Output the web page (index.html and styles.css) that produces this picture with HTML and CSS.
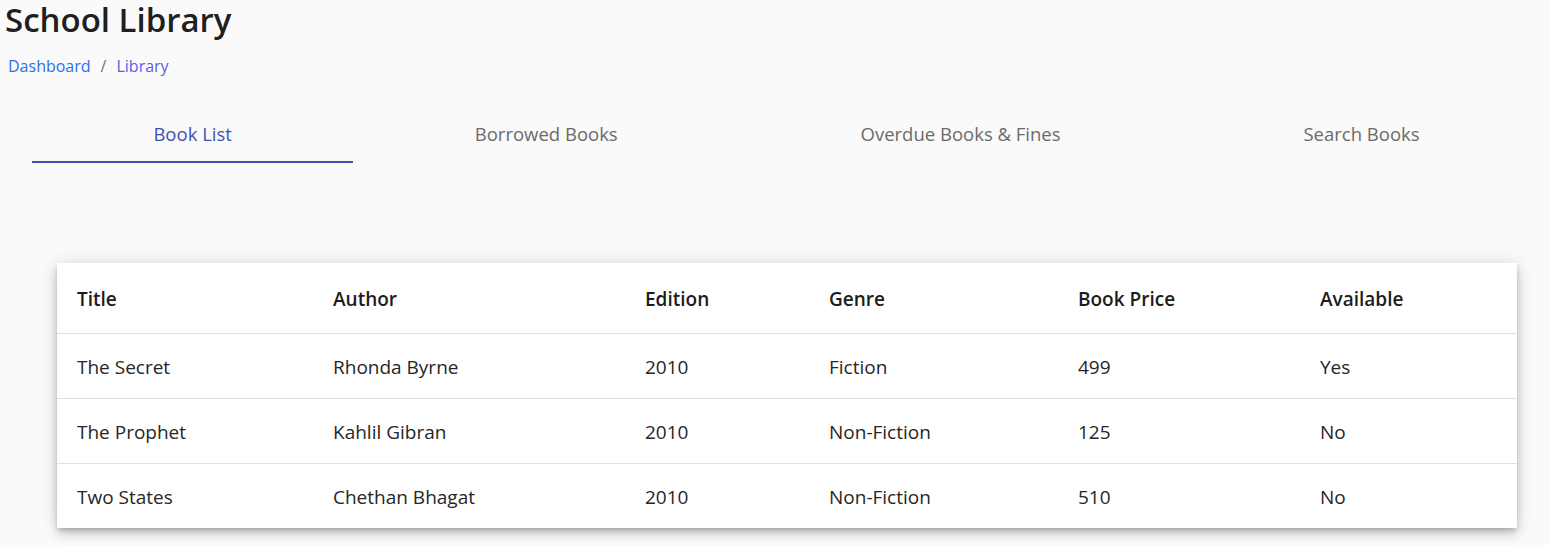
FILE: index.html
```html
<!DOCTYPE html>
<html lang="en">
<head>
<meta charset="utf-8">
<title>School Library</title>
<link rel="stylesheet" href="styles.css">
</head>
<body>
<header class="page-head">
  <h1 class="page-title">School Library</h1>
  <nav class="breadcrumb">
    <a class="crumb" href="#">Dashboard</a>
    <span class="sep">/</span>
    <a class="crumb crumb-current" href="#">Library</a>
  </nav>
</header>
<div class="tabs">
  <button class="tab tab-active">Book List</button>
  <button class="tab">Borrowed Books</button>
  <button class="tab">Overdue Books &amp; Fines</button>
  <button class="tab">Search Books</button>
</div>
<section class="card">
  <table class="books">
    <colgroup>
      <col class="c-title"><col class="c-author"><col class="c-edition"><col class="c-genre"><col class="c-price"><col class="c-avail">
    </colgroup>
    <thead>
      <tr><th>Title</th><th>Author</th><th>Edition</th><th>Genre</th><th>Book Price</th><th>Available</th></tr>
    </thead>
    <tbody>
      <tr><td>The Secret</td><td>Rhonda Byrne</td><td>2010</td><td>Fiction</td><td>499</td><td>Yes</td></tr>
      <tr><td>The Prophet</td><td>Kahlil Gibran</td><td>2010</td><td>Non-Fiction</td><td>125</td><td>No</td></tr>
      <tr><td>Two States</td><td>Chethan Bhagat</td><td>2010</td><td>Non-Fiction</td><td>510</td><td>No</td></tr>
    </tbody>
  </table>
</section>
</body>
</html>
```

FILE: styles.css
```css
* { box-sizing: border-box; }
html, body { margin: 0; padding: 0; }
body {
  background: #fafafa;
  font-family: "Open Sans", "Noto Sans", "Liberation Sans", sans-serif;
  color: #212121;
}
.page-head { padding-left: 5px; }
.page-title {
  margin: 0;
  font-size: 33px;
  line-height: 40px;
  font-weight: 600;
  color: #1f1f1f;
}
.breadcrumb {
  margin-top: 14px;
  padding-left: 3px;
  font-size: 16px;
  line-height: 24px;
  display: flex;
  gap: 10px;
}
.crumb { color: #2b6ef5; text-decoration: none; }
.crumb-current { color: #5a5ee6; }
.sep { color: #757575; }
.tabs {
  display: flex;
  margin-top: 29px;
  padding: 0 8px 0 32px;
}
.tab {
  flex: 1 1 auto;
  height: 56px;
  padding: 15px 0 15px;
  border: 0;
  border-bottom: 2px solid transparent;
  background: transparent;
  font-family: inherit;
  font-size: 18.5px;
  line-height: 24px;
  color: #6b6b6b;
  cursor: pointer;
}
.tab-active { color: #3f51b5; border-bottom-color: #3f51b5; }
.card {
  margin: 100px 32px 18px 57px;
  background: #fff;
  box-shadow: 0 3px 5px -1px rgba(0,0,0,.2), 0 6px 10px 0 rgba(0,0,0,.14), 0 1px 18px 0 rgba(0,0,0,.12);
}
.books {
  width: 100%;
  border-collapse: collapse;
  table-layout: fixed;
  font-size: 19px;
  line-height: 24px;
}
.c-title { width: 256px; }
.c-author { width: 312px; }
.c-edition { width: 184px; }
.c-genre { width: 249px; }
.c-price { width: 242px; }
.c-avail { width: 217px; }
.books th, .books td {
  text-align: left;
  padding: 21px 20px 19px;
  border-bottom: 1px solid #e0e0e0;
}
.books th {
  padding: 24px 20px 22px;
  font-weight: 600;
  color: #1c1c1c;
}
.books td { color: #262626; }
.books tbody tr:last-child td { border-bottom: 0; }
```
